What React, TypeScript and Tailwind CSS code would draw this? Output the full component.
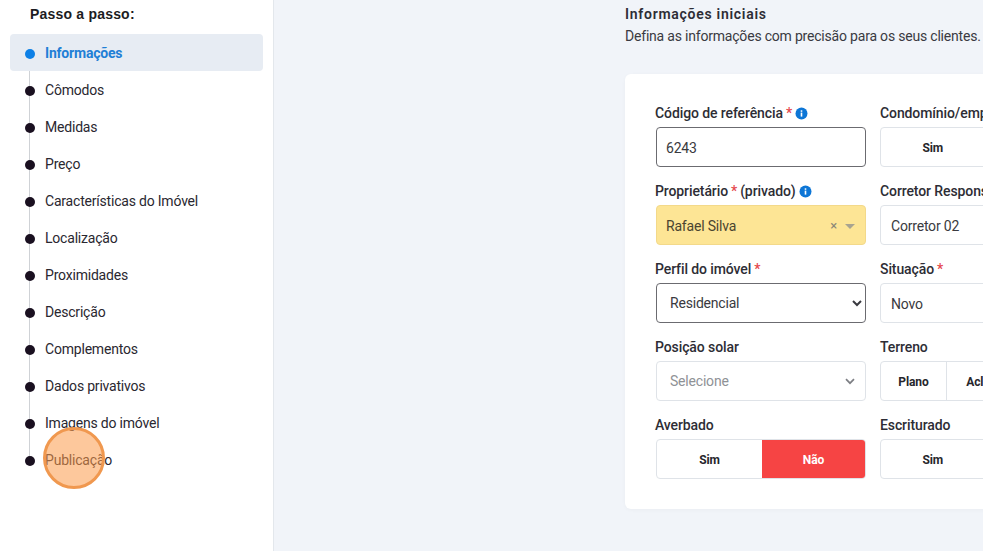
import React from "react";

const font = { fontFamily: "Roboto, 'Liberation Sans', sans-serif" };

const steps = ["Informações","Cômodos","Medidas","Preço","Características do Imóvel","Localização","Proximidades","Descrição","Complementos","Dados privativos","Imagens do imóvel","Publicação"];

function Info() {
  return (
    <svg width="13" height="13" viewBox="0 0 13 13" className="shrink-0">
      <circle cx="6.5" cy="6.5" r="6" fill="#0d76d6" />
      <rect x="5.7" y="5.6" width="1.6" height="4" fill="#fff" />
      <rect x="5.7" y="3.3" width="1.6" height="1.5" fill="#fff" />
    </svg>
  );
}

function Label({ text, req, extra, info, first }: { text: string; req?: boolean; extra?: string; info?: boolean; first?: boolean }) {
  return (
    <div className={"h-[14px] flex items-center gap-[3px] text-[14px] leading-[14px] text-[#2d2d35] font-medium whitespace-nowrap mb-[7px] tracking-[-0.1px] " + (first ? "-ml-px" : "")}>
      <span>{text}</span>
      {req && <span className="text-[#e5484d]">*</span>}
      {extra && <span>{extra}</span>}
      {info && <Info />}
    </div>
  );
}

function Seg({ items, active, widths }: { items: string[]; active?: string; widths?: string[] }) {
  return (
    <div className="flex h-10 w-[210px] rounded border border-[#dfe3e8] bg-white overflow-hidden">
      {items.map((t, i) => (
        <div
          key={t}
          className={
            "flex items-center justify-center pt-[2px] text-[12px] font-bold tracking-[-0.1px] " +
            (t === active ? "bg-[#f64444] text-white " : "text-[#26262c] ") +
            (i > 0 && t !== active ? "border-l border-[#dfe3e8] " : "") +
            (widths ? "" : "flex-1")
          }
          style={widths ? { width: widths[i], flex: "none" } : undefined}
        >
          {t}
        </div>
      ))}
    </div>
  );
}

function Field({ children, className = "" }: { children: React.ReactNode; className?: string }) {
  return (
    <div className={"flex items-center justify-between h-10 w-[210px] rounded border pr-[10px] text-[14px] tracking-[-0.2px] " + className}>
      {children}
    </div>
  );
}

export default function App() {
  return (
    <div className="flex h-[551px] w-[983px] overflow-hidden bg-[#f1f4f9]" style={font}>
      <aside className="relative w-[274px] shrink-0 h-full bg-white border-r border-[#e3e7ec] pt-[6px] pl-[10px]">
        <h2 className="pl-5 h-[16px] leading-[16px] text-[14px] font-bold text-[#1c1c22] mb-[12px] tracking-[0.2px]" style={{ fontFamily: "'Liberation Sans', sans-serif" }}>Passo a passo:</h2>
        <ul className="relative w-[253px]">
          <div className="absolute left-[19px] top-[37px] h-[390px] w-px bg-[#cfd2d6]" />
          {steps.map((s, i) => (
            <li
              key={s}
              className={"relative flex items-center h-[37px] pl-[15px] pt-[2px] gap-[10px] rounded text-[14px] tracking-[-0.2px] " + (i === 0 ? "bg-[#e7ecf3] text-[#1f7fd6] font-bold" : "text-[#2a2730]")}
            >
              <span className={"w-[10px] h-[10px] rounded-full shrink-0 " + (i === 0 ? "bg-[#0d80e6]" : "bg-[#1a1020]")} />
              {s}
            </li>
          ))}
        </ul>
        <div className="absolute left-[43px] top-[427px] w-[62px] h-[62px] rounded-full border-[3px] border-[#f0984f] bg-[#fb9a4b]/55" />
      </aside>

      <main className="pl-[351px] pt-[6px] shrink-0">
        <h1 className="text-[14px] leading-[16px] font-semibold text-[#2d2d35] tracking-[0.72px] whitespace-nowrap">Informações iniciais</h1>
        <p className="text-[14px] leading-[16px] mt-[6px] text-[#3a3a42] whitespace-nowrap tracking-[-0.2px]">Defina as informações com precisão para os seus clientes.</p>
        <div className="mt-[30px] w-[600px] h-[435px] bg-white rounded-md shadow-[0_1px_4px_rgba(0,0,0,0.03)] pt-[32px] pl-[31px]">
          <div className="grid grid-cols-[210px_210px] gap-x-[14px] gap-y-[17px]">
            <div>
              <Label first text="Código de referência" req info />
              <Field className="border-[#6b6b70] text-[#3a3a40] pl-[9px] pt-[2px]">6243</Field>
            </div>
            <div>
              <Label text="Condomínio/empreendimento" />
              <Seg items={["Sim", "Não"]} />
            </div>
            <div>
              <Label first text="Proprietário" req extra="(privado)" info />
              <Field className="bg-[#fde595] border-[#f3d98a] text-[#4a4430] pl-[9px] pt-[2px]">
                <span>Rafael Silva</span>
                <span className="flex items-center gap-[8px] text-[#8a8678]">
                  <span className="text-[13px]">×</span>
                  <span className="w-0 h-0 border-x-[5px] border-x-transparent border-t-[5px] border-t-[#a8a390]" />
                </span>
              </Field>
            </div>
            <div>
              <Label text="Corretor Responsável" />
              <Field className="bg-white border-[#dfe3e8] text-[#3a3a40] pl-[10px] pt-[2px]">Corretor 02</Field>
            </div>
            <div>
              <Label first text="Perfil do imóvel" req />
              <select defaultValue="r" className="block h-10 w-[210px] rounded border border-[#6b6b70] bg-white pl-[9px] text-[14px] tracking-[-0.2px] text-[#3a3a40]">
                <option value="r">Residencial</option>
              </select>
            </div>
            <div>
              <Label text="Situação" req />
              <Field className="bg-white border-[#dfe3e8] text-[#3a3a40] pl-[10px] pt-[3px]">Novo</Field>
            </div>
            <div>
              <Label first text="Posição solar" />
              <Field className="bg-white border-[#dfe3e8] text-[#8f9296] pl-[13px] pr-[9px]">
                <span>Selecione</span>
                <svg width="10" height="7" viewBox="0 0 10 7" fill="none" stroke="#7d7f84" strokeWidth="1.7"><path d="M1 1.2l4 4 4-4" /></svg>
              </Field>
            </div>
            <div>
              <Label text="Terreno" />
              <Seg items={["Plano", "Aclive", "Declive"]} widths={["65px", "72px", "72px"]} />
            </div>
            <div>
              <Label first text="Averbado" />
              <Seg items={["Sim", "Não"]} active="Não" widths={["105px", "103px"]} />
            </div>
            <div>
              <Label text="Escriturado" />
              <Seg items={["Sim", "Não"]} />
            </div>
          </div>
        </div>
      </main>
    </div>
  );
}
